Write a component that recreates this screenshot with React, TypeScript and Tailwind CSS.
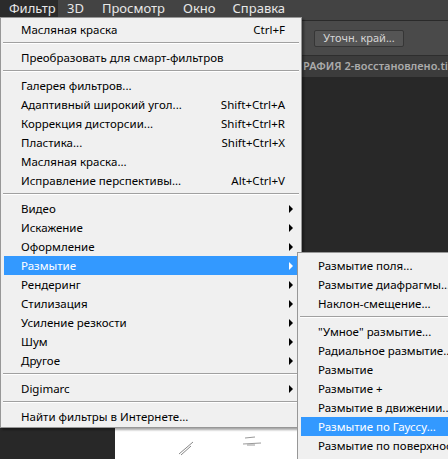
import React from "react";

type Item =
  | { kind: "sep" }
  | { kind: "item"; label: string; shortcut?: string; sub?: boolean; active?: boolean };

const filterMenu: Item[] = [
  { kind: "item", label: "Масляная краска", shortcut: "Ctrl+F" },
  { kind: "sep" },
  { kind: "item", label: "Преобразовать для смарт-фильтров" },
  { kind: "sep" },
  { kind: "item", label: "Галерея фильтров..." },
  { kind: "item", label: "Адаптивный широкий угол...", shortcut: "Shift+Ctrl+A" },
  { kind: "item", label: "Коррекция дисторсии...", shortcut: "Shift+Ctrl+R" },
  { kind: "item", label: "Пластика...", shortcut: "Shift+Ctrl+X" },
  { kind: "item", label: "Масляная краска..." },
  { kind: "item", label: "Исправление перспективы...", shortcut: "Alt+Ctrl+V" },
  { kind: "sep" },
  { kind: "item", label: "Видео", sub: true },
  { kind: "item", label: "Искажение", sub: true },
  { kind: "item", label: "Оформление", sub: true },
  { kind: "item", label: "Размытие", sub: true, active: true },
  { kind: "item", label: "Рендеринг", sub: true },
  { kind: "item", label: "Стилизация", sub: true },
  { kind: "item", label: "Усиление резкости", sub: true },
  { kind: "item", label: "Шум", sub: true },
  { kind: "item", label: "Другое", sub: true },
  { kind: "sep" },
  { kind: "item", label: "Digimarc", sub: true },
  { kind: "sep" },
  { kind: "item", label: "Найти фильтры в Интернете..." },
];

const blurMenu: Item[] = [
  { kind: "item", label: "Размытие поля..." },
  { kind: "item", label: "Размытие диафрагмы..." },
  { kind: "item", label: "Наклон-смещение..." },
  { kind: "sep" },
  { kind: "item", label: "\"Умное\" размытие..." },
  { kind: "item", label: "Радиальное размытие..." },
  { kind: "item", label: "Размытие" },
  { kind: "item", label: "Размытие +" },
  { kind: "item", label: "Размытие в движении..." },
  { kind: "item", label: "Размытие по Гауссу...", active: true },
  { kind: "item", label: "Размытие по поверхности..." },
];

function Arrow({ white }: { white?: boolean }) {
  return (
    <svg width="5" height="8" viewBox="0 0 5 8" className="absolute right-[4px] top-[6px]">
      <path d="M0 0 L4 4 L0 8 Z" fill={white ? "#ffffff" : "#000000"} />
    </svg>
  );
}

function MenuList({ items }: { items: Item[] }) {
  return (
    <>
      {items.map((it, i) =>
        it.kind === "sep" ? (
          <div key={i} className="h-[9px] pt-[3px] px-[2px]">
            <div className="h-px bg-[#a0a0a0]" />
            <div className="h-px bg-[#ffffff]" />
          </div>
        ) : (
          <div
            key={i}
            className={`relative mx-[3px] h-[19px] flex items-center whitespace-nowrap pl-[17px] pr-[13px] ${
              it.active ? "bg-[#3399ff] text-white" : "text-black"
            }`}
          >
            <span className="flex-1">{it.label}</span>
            {it.shortcut && <span>{it.shortcut}</span>}
            {it.sub && <Arrow white={it.active} />}
          </div>
        )
      )}
    </>
  );
}

export default function App() {
  return (
    <div
      className="relative w-[448px] h-[459px] overflow-hidden bg-[#282828] text-[11.5px]"
      style={{ fontFamily: '"Noto Sans", "Open Sans", sans-serif' }}
    >
      {/* application menu bar */}
      <div className="h-[21px] flex items-start bg-[#434343] border-b border-[#2a2a2a] text-[#e8e8e8] text-[13px]">
        <div className="h-[17px] w-[58px] bg-[#2b2b2b] flex items-center pl-[9px] leading-none">Фильтр</div>
        <span className="ml-[9px] h-[17px] flex items-center leading-none">3D</span>
        <span className="ml-[18px] h-[17px] flex items-center leading-none">Просмотр</span>
        <span className="ml-[18px] h-[17px] flex items-center leading-none">Окно</span>
        <span className="ml-[17px] h-[17px] flex items-center leading-none">Справка</span>
      </div>

      {/* options bar */}
      <div className="h-[35px] bg-[#4a4a4a] border-b border-[#2e2e2e] flex items-center pl-[314px]">
        <div className="w-[90px] h-[17px] rounded-[2px] bg-[#555555] border border-[#363636] text-[#d6d6d6] text-[11px] flex items-center justify-center">
          Уточн. край...
        </div>
      </div>

      {/* document tab */}
      <div className="h-[21px] bg-[#3c3c3c] flex items-center pl-[303px] text-[#ababab] text-[11px] font-semibold whitespace-nowrap">
        РАФИЯ 2-восстановлено.tif
      </div>

      {/* canvas */}
      <div className="h-[381px] flex pt-[351px] pl-[115px]">
        <div className="w-[190px] h-[40px] bg-white relative">
          <svg width="190" height="40" viewBox="0 0 190 40" className="absolute inset-0">
            <path d="M64 26 L78 14 M66 27 L76 18" stroke="#888" strokeWidth="1" />
            <path d="M130 10 L140 9 M128 16 L146 15 M132 17 L140 17" stroke="#999" strokeWidth="1" />
          </svg>
        </div>
      </div>

      {/* Filter dropdown */}
      <div className="absolute left-0 top-[17px] w-[302px] h-[411px] bg-[#f0f0f0] border border-[#979797] pt-[2px] shadow-[2px_2px_2px_rgba(0,0,0,0.35)]">
        <MenuList items={filterMenu} />
      </div>

      {/* Blur submenu */}
      <div className="absolute left-[297px] top-[252px] w-[170px] h-[220px] bg-[#f0f0f0] border border-[#979797] pt-[3px]">
        <MenuList items={blurMenu} />
      </div>
    </div>
  );
}
